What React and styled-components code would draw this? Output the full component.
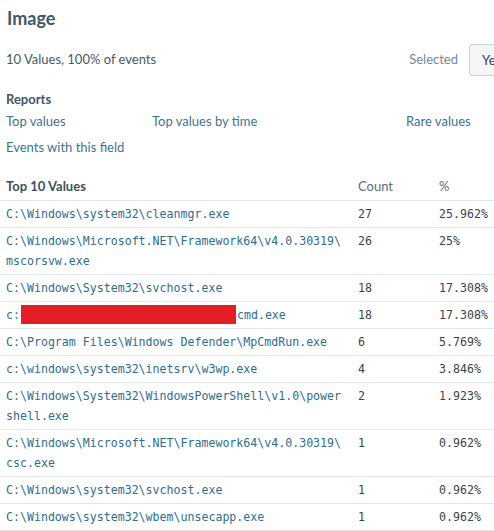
import React from "react";
import styled, {createGlobalStyle} from "styled-components";

const GlobalStyle = createGlobalStyle`
  body {
    margin: 0;
    background: #ffffff;
    font-family: Lato, "Open Sans", sans-serif;
    overflow: hidden;
  }
`

const Panel = styled.div`
  width: 494px;
  overflow: hidden;
  color: #3c444d;
`

const Title = styled.h2`
  margin: 0;
  padding: 6px 7px 0;
  height: 36px;
  line-height: 24px;
  font-size: 18px;
  font-weight: 700;
  color: #425866;
`

const SummaryRow = styled.div`
  display: flex;
  align-items: center;
  justify-content: space-between;
  height: 34px;
  padding-left: 6px;
  font-size: 13px;
  color: #465a68;
`

const SelectedGroup = styled.div`
  display: flex;
  align-items: center;
  gap: 11px;
  margin-right: -24px;
  color: #6f8aa0;
`

const ToggleButton = styled.button`
  box-sizing: border-box;
  width: 49px;
  height: 32px;
  margin-top: 1px;
  padding: 0 0 0 12px;
  text-align: left;
  border: 1px solid #c5d3df;
  border-radius: 3px;
  background: #f4f6f8;
  color: #3c444d;
  font: inherit;
`

const SectionLabel = styled.div`
  padding: 15px 6px 0;
  line-height: 16px;
  font-size: 13px;
  font-weight: 700;
  color: #425866;
`

const LinkGrid = styled.div`
  display: grid;
  grid-template-columns: 146px 254px auto;
  row-gap: 10px;
  padding: 6px 6px 0;
  line-height: 16px;
  font-size: 13px;
`

const Link = styled.a`
  color: #3d7493;
  text-decoration: none;
  cursor: pointer;
`

const Table = styled.table`
  width: 494px;
  margin-top: 18px;
  border-collapse: collapse;
  table-layout: fixed;
`

const HeadCell = styled.th`
  box-sizing: border-box;
  width: ${props => props.$w}px;
  padding: 5px 6px 6px;
  text-align: left;
  line-height: 16px;
  font-size: 13px;
  font-weight: ${props => props.$bold ? 700 : 400};
  color: ${props => props.$bold ? "#3c4f5e" : "#5c6d7a"};
  border-bottom: 1px solid #e1e6eb;
`

const Cell = styled.td`
  box-sizing: border-box;
  padding: 3px 6px 3px;
  vertical-align: top;
  line-height: 20px;
  font-family: "DejaVu Sans Mono", monospace;
  font-size: 11.6px;
  color: ${props => props.$value ? "#2f6d8d" : "#3c444d"};
  line-break: anywhere;
  overflow-wrap: anywhere;
  border-bottom: 1px solid #e1e6eb;
`

const Redacted = styled.span`
  display: inline-block;
  width: 215px;
  height: 19px;
  margin: 0 1px;
  vertical-align: -5px;
  background: #e31e24;
`

const rows = [
    ["C:\\Windows\\system32\\cleanmgr.exe", "27", "25.962%"],
    ["C:\\Windows\\Microsoft.NET\\Framework64\\v4.0.30319\\mscorsvw.exe", "26", "25%"],
    ["C:\\Windows\\System32\\svchost.exe", "18", "17.308%"],
    [null, "18", "17.308%"],
    ["C:\\Program Files\\Windows Defender\\MpCmdRun.exe", "6", "5.769%"],
    ["c:\\windows\\system32\\inetsrv\\w3wp.exe", "4", "3.846%"],
    ["C:\\Windows\\System32\\WindowsPowerShell\\v1.0\\powershell.exe", "2", "1.923%"],
    ["C:\\Windows\\Microsoft.NET\\Framework64\\v4.0.30319\\csc.exe", "1", "0.962%"],
    ["C:\\Windows\\system32\\svchost.exe", "1", "0.962%"],
    ["C:\\Windows\\system32\\wbem\\unsecapp.exe", "1", "0.962%"],
]

const App = () => {
    return (
        <Panel>
            <GlobalStyle/>
            <Title>Image</Title>
            <SummaryRow>
                <span>10 Values, 100% of events</span>
                <SelectedGroup>
                    <span>Selected</span>
                    <ToggleButton>Yes</ToggleButton>
                </SelectedGroup>
            </SummaryRow>

            <SectionLabel>Reports</SectionLabel>
            <LinkGrid>
                <Link>Top values</Link>
                <Link>Top values by time</Link>
                <Link>Rare values</Link>
                <Link>Events with this field</Link>
            </LinkGrid>

            <Table>
                <thead>
                <tr>
                    <HeadCell $w={352} $bold>Top 10 Values</HeadCell>
                    <HeadCell $w={81}>Count</HeadCell>
                    <HeadCell $w={61}>%</HeadCell>
                </tr>
                </thead>
                <tbody>
                {rows.map(([value, count, pct], i) => (
                    <tr key={i}>
                        <Cell $value>
                            {value === null ? <>c:<Redacted/>cmd.exe</> : value}
                        </Cell>
                        <Cell>{count}</Cell>
                        <Cell>{pct}</Cell>
                    </tr>
                ))}
                </tbody>
            </Table>
        </Panel>
    );
}

export default App;
